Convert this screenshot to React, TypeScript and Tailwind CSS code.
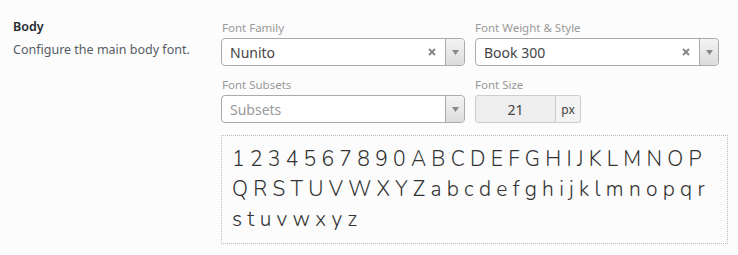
import React from "react";

function Arrow() {
  return (
    <div className="w-[19px] h-full border-l border-[#aaa] bg-gradient-to-b from-[#f4f4f4] to-[#dcdcdc] rounded-r-[4px] flex items-center justify-center">
      <svg width="7" height="5" viewBox="0 0 7 5">
        <path d="M0 0 L7 0 L3.5 5 Z" fill="#888" />
      </svg>
    </div>
  );
}

function Clear() {
  return (
    <div className="w-[26px] flex items-center justify-center">
      <svg width="8" height="8" viewBox="0 0 8 8">
        <path d="M1 1 L7 7 M7 1 L1 7" stroke="#888" strokeWidth="2" />
      </svg>
    </div>
  );
}

function Select({ value, placeholder, clear }: { value?: string; placeholder?: string; clear?: boolean }) {
  return (
    <div className="h-[28px] w-[244px] border border-[#aaa] rounded-[4px] bg-white flex items-stretch">
      <div
        className={
          "flex-1 pl-[8px] flex items-center text-[14px] " +
          (value ? "text-[#444]" : "text-[#999]")
        }
      >
        {value ?? placeholder}
      </div>
      {clear ? <Clear /> : null}
      <Arrow />
    </div>
  );
}

export default function App() {
  return (
    <div className="w-[738px] h-[255px] bg-[#fcfcfc] flex font-['Noto_Sans','Open_Sans',sans-serif]">
      <div className="w-[221px] pl-[13px] pt-[18px] shrink-0">
        <div className="text-[12.5px] leading-[18px] font-semibold text-[#23282d]">Body</div>
        <div className="text-[12.5px] leading-[18px] text-[#555d66] mt-[5px]">Configure the main body font.</div>
      </div>
      <div className="pt-[20px] flex flex-col">
        <div className="grid grid-cols-[244px_244px] gap-x-[10px]">
          <div className="flex flex-col">
            <div className="text-[11.5px] leading-[16px] text-[#999] pl-[1px] mb-[2px]">Font Family</div>
            <Select value="Nunito" clear />
          </div>
          <div className="flex flex-col">
            <div className="text-[11.5px] leading-[16px] text-[#999] mb-[2px]">Font Weight &amp; Style</div>
            <Select value="Book 300" clear />
          </div>
          <div className="flex flex-col mt-[11px]">
            <div className="text-[11.5px] leading-[16px] text-[#999] pl-[1px] mb-[2px]">Font Subsets</div>
            <Select placeholder="Subsets" />
          </div>
          <div className="flex flex-col mt-[11px]">
            <div className="text-[11.5px] leading-[16px] text-[#999] mb-[2px]">Font Size</div>
            <div className="flex h-[28px]">
              <div className="w-[81px] bg-[#eeeeee] border border-[#ccc] rounded-l-[3px] flex items-center justify-center text-[14px] text-[#444]">
                21
              </div>
              <div className="w-[25px] bg-[#f3f3f3] border border-l-0 border-[#ccc] rounded-r-[3px] flex items-end justify-center pb-[3px] text-[12px] text-[#444]">
                px
              </div>
            </div>
          </div>
        </div>
        <div className="mt-[12px] w-[507px] h-[109px] border border-dotted border-[#bbb] pl-[10px] pt-[8px] font-['Nunito','Lato',sans-serif] font-light text-[21px] leading-[30px] text-[#333] whitespace-nowrap">
          <div>1 2 3 4 5 6 7 8 9 0 A B C D E F G H I J K L M N O P</div>
          <div>Q R S T U V W X Y Z a b c d e f g h i j k l m n o p q r</div>
          <div>s t u v w x y z</div>
        </div>
      </div>
    </div>
  );
}
